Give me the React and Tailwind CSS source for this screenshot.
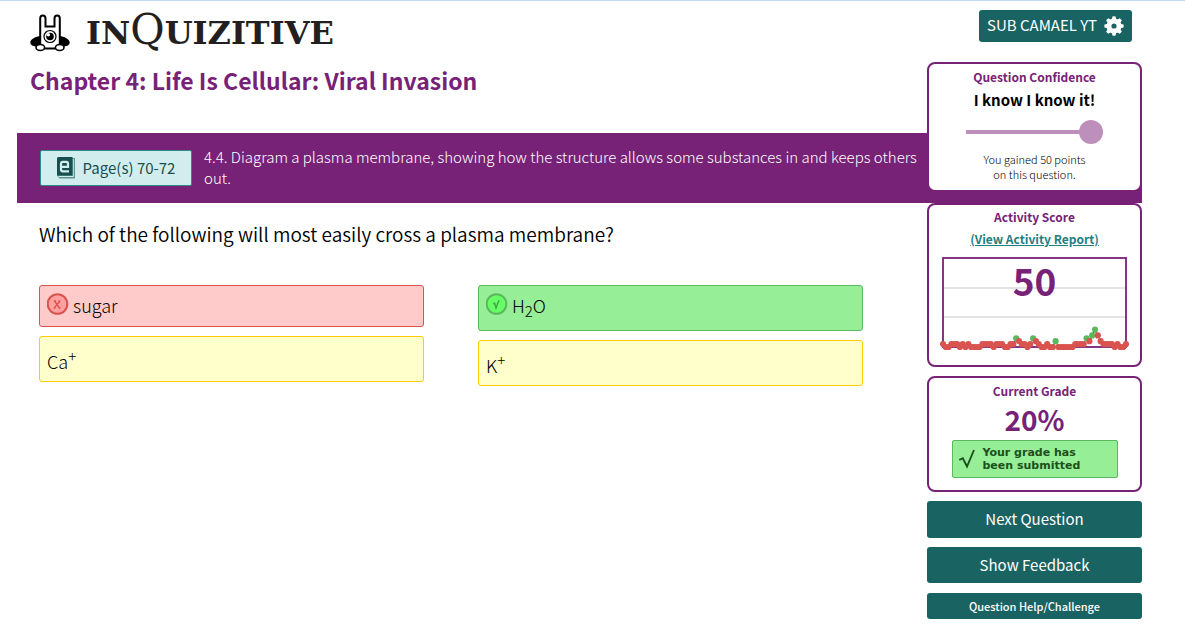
import React from "react";

const LEVELS = [
  1, 0, 0, 1, 1, 1, 0, 1, 0, 1, 0, 0, 0, 0, 1, 1, 1, 1, 0, 1, 1, 1, 0, 0, 1, 1, 3, 2, 1, 1, 0, 1, 3,
  2, 1, 0, 0, 1, 0, 0, 2, 0, 0, 0, 0, 0, 0, 1, 1, 1, 1, 3, 2, 4, 6, 4, 2, 1, 1, 1, 1, 0, 1, 0, 0, 1,
];
const CORRECT = [26, 32, 40, 51, 53, 54];
const pointX = (i) => 3 + i * 2.815;
const pointY = (level) => 91 - level * 2.9;

const CARD = "rounded-lg border-2 border-[#772277] bg-white text-center";
const CARD_TITLE = "text-[12px] leading-4 font-bold text-[#772277]";
const ACTION = "w-full rounded-[3px] bg-[#1a6363] text-white";
const ANSWER = "flex w-full items-start rounded-[3px] border text-left text-[18px] leading-6 font-light text-black";

function Rabbit() {
  return (
    <svg width="40" height="38" viewBox="0 0 40 38" aria-hidden="true">
      <path d="M10 22C4 23 .3 26 .3 28.500C.3 32 5 33 12 32.500H28C35 33 39.700 32 39.700 28.500C39.700 26 36 23 30 22Z" fill="#000" />
      <path
        d="M10.200 31V4.500Q10.200 1.500 12.800 1.500Q15.500 1.500 15.500 4.500V12.500H24.500V4.500Q24.500 1.500 27.200 1.500Q29.800 1.500 29.800 4.500V31Q29.800 34.500 26 34.500H14Q10.200 34.500 10.200 31Z"
        fill="#fff" stroke="#000" strokeWidth="2"
      />
      <circle cx="20" cy="22.500" r="6" fill="#fff" stroke="#000" strokeWidth="1.200" />
      <circle cx="20" cy="22.500" r="3.800" fill="#000" />
      <circle cx="18.300" cy="20.700" r="1.800" fill="#fff" />
      <ellipse cx="10.300" cy="33.500" rx="4.300" ry="3" fill="#fff" stroke="#000" strokeWidth="1.600" />
      <ellipse cx="29.700" cy="33.500" rx="4.300" ry="3" fill="#fff" stroke="#000" strokeWidth="1.600" />
    </svg>
  );
}

function Gear() {
  return (
    <svg width="20" height="20" viewBox="0 0 20 20" aria-hidden="true">
      <circle cx="10" cy="10" r="5.100" fill="none" stroke="#fff" strokeWidth="5" />
      {[0, 45, 90, 135, 180, 225, 270, 315].map((a) => (
        <path key={a} d="M7.800 4L8.400 .5Q10 0 11.600 .5L12.200 4Z" fill="#fff" transform={`rotate(${a} 10 10)`} />
      ))}
    </svg>
  );
}

function Ebook() {
  return (
    <svg width="18" height="22" viewBox="0 0 18 22" aria-hidden="true">
      <path d="M3 1H18V21.500H2.500L.3 19Z" fill="#5f9494" />
      <path d="M1.500 19.500H16.300V2" fill="none" stroke="#d2eded" strokeWidth="1" />
      <path d="M1.500 0H15.500V18.500H0V1.500Q0 0 1.500 0Z" fill="#174e4e" />
      <path d="M4 9.800H11V6.500Q11 4.800 9.300 4.800H5.900Q4 4.800 4 6.700V12.500Q4 14.400 5.900 14.400H12" fill="none" stroke="#d2eded" strokeWidth="2.200" />
    </svg>
  );
}

function WrongMark() {
  return (
    <svg width="22" height="22" viewBox="0 0 22 22" role="img" aria-label="Incorrect">
      <circle cx="10.500" cy="11" r="9.800" fill="#ffa0a0" stroke="#d9534f" strokeWidth="2" />
      <path d="M7.500 8L12.500 15M13 8L7.200 15M6.800 8H9M11.500 8H13.300M6.800 15H8.600M11.500 15H13.500" stroke="#d9534f" strokeWidth="1.300" />
    </svg>
  );
}

function RightMark() {
  return (
    <svg width="22" height="22" viewBox="0 0 22 22" role="img" aria-label="Correct">
      <circle cx="10.500" cy="11" r="9.800" fill="#66ff66" stroke="#5cb85c" strokeWidth="2" />
      <path d="M7.300 10.700L8.600 10.200L10 15L13 7.300" fill="none" stroke="#45a545" strokeWidth="1.500" />
    </svg>
  );
}

function ScoreChart() {
  return (
    <svg viewBox="0 0 189 97" className="w-full" role="img" aria-label="Activity score history">
      <path d="M3 32H186M3 61H186" stroke="#dcdcdc" strokeWidth="1.500" />
      <rect x="3" y="2" width="183" height="89" fill="none" stroke="#772277" strokeWidth="1.800" />
      <polyline
        points={LEVELS.map((l, i) => `${pointX(i)},${pointY(l)}`).join(" ")}
        fill="none" stroke="#111" strokeWidth="1.300" strokeDasharray="2 1"
      />
      {LEVELS.map((l, i) => (
        <circle key={i} cx={pointX(i)} cy={pointY(l)} r="3.100" fill={CORRECT.includes(i) ? "#5cb85c" : "#d9534f"} />
      ))}
    </svg>
  );
}

export default function App() {
  return (
    <div className="min-h-screen border-t border-[#c5d8f5] bg-white pr-[43px] pl-[17px] font-['Noto_Sans_CJK_SC','Open_Sans',sans-serif]">
      <div className="grid grid-cols-[1fr_215px] grid-rows-[132px_auto_1fr]">
        <header className="col-start-1 row-start-1 pt-3 pl-[13px]">
          <div className="flex h-10 items-center gap-4">
            <Rabbit />
            <div className="pb-1 font-['DejaVu_Serif',serif] text-[32px] leading-10 font-bold text-[#231f20]">
              IN<span className="text-[42px] leading-10 font-normal">Q</span>UIZITIVE
            </div>
          </div>
          <h1 className="mt-[11px] text-[23px] leading-8 font-bold text-[#772277]">
            Chapter 4: Life Is Cellular: Viral Invasion
          </h1>
        </header>

        <section className="col-span-2 col-start-1 row-start-2 flex items-start bg-[#772277] pt-[13px] pr-[223px] pb-[15px] pl-[23px] text-white">
          <a href="#pages" className="mt-1 flex h-9 w-[152px] shrink-0 items-center justify-center gap-2 rounded-[2px] border border-[#2e8b8b] bg-[#d2eded] text-[15px] text-[#174e4e]">
            <Ebook />
            Page(s) 70-72
          </a>
          <p className="ml-3 text-[15px] leading-[21px] font-light">
            4.4. Diagram a plasma membrane, showing how the structure allows some substances in and keeps others out.
          </p>
        </section>

        <main className="col-start-1 row-start-3 pr-16 pl-[22px]">
          <h2 className="pt-[15px] text-[19px] leading-8 font-[350] text-black">
            Which of the following will most easily cross a plasma membrane?
          </h2>
          <div className="mt-[35px] grid grid-cols-2 items-start gap-x-[54px]">
            <div className="flex flex-col gap-[9px]">
              <button className={`${ANSWER} h-[42px] gap-1 border-[#d9534f] bg-[#ffcaca] px-[7px] pt-[7px]`}>
                <WrongMark />
                <span>sugar</span>
              </button>
              <button className={`${ANSWER} h-[46px] border-[#ffcc00] bg-[#ffffcc] px-[7px] pt-3`}>
                <span>Ca<sup className="text-[15px]">+</sup></span>
              </button>
            </div>
            <div className="flex flex-col gap-[9px]">
              <button className={`${ANSWER} h-[46px] gap-1 border-[#5cb85c] bg-[#96ee96] px-[7px] pt-[7px]`}>
                <RightMark />
                <span>H<sub className="text-[15px]">2</sub>O</span>
              </button>
              <button className={`${ANSWER} h-[46px] border-[#ffcc00] bg-[#ffffcc] px-[7px] pt-3`}>
                <span>K<sup className="text-[15px]">+</sup></span>
              </button>
            </div>
          </div>
        </main>

        <aside className="col-start-2 row-span-3 row-start-1 flex flex-col pt-[9px]">
          <button className="mr-[10px] flex h-8 items-center gap-[7px] self-end rounded-[3px] bg-[#1a6363] px-2 pb-px text-[15px] text-white">
            SUB CAMAEL YT
            <Gear />
          </button>

          <section className={`${CARD} mt-5 h-[130px] pt-[5px]`}>
            <h3 className={CARD_TITLE}>Question Confidence</h3>
            <label htmlFor="confidence" className="mt-[3px] block text-[15px] leading-6 font-bold text-black">I know I know it!</label>
            <input
              id="confidence"
              type="range"
              defaultValue="100"
              className="mx-auto mt-2 block h-6 w-[137px] appearance-none bg-transparent [&::-webkit-slider-runnable-track]:h-1 [&::-webkit-slider-runnable-track]:bg-[#bd90bb] [&::-webkit-slider-thumb]:-mt-[10px] [&::-webkit-slider-thumb]:size-6 [&::-webkit-slider-thumb]:appearance-none [&::-webkit-slider-thumb]:rounded-full [&::-webkit-slider-thumb]:bg-[#bd90bb]"
            />
            <p className="mt-2 text-[11px] leading-[15px] font-light text-black">
              You gained 50 points
              <br />
              on this question.
            </p>
          </section>

          <section className={`${CARD} mt-[11px] h-[164px] px-[11px] pt-1`}>
            <h3 className={CARD_TITLE}>Activity Score</h3>
            <a href="#report" className="mt-1.5 block text-[12px] leading-4 font-bold text-[#1f8080] underline">
              (View Activity Report)
            </a>
            <div className="relative mt-[9px]">
              <ScoreChart />
              <div className="absolute inset-x-0 top-0 text-[37px] leading-[48px] font-bold text-[#772277]">50</div>
            </div>
          </section>

          <section className={`${CARD} mt-[9px] h-[116px] pt-[5px]`}>
            <h3 className={CARD_TITLE}>Current Grade</h3>
            <div className="mt-0.5 text-[28px] leading-9 font-bold text-[#772277]">20%</div>
            <div className="mx-auto mt-[3px] flex h-[38px] w-[166px] items-center rounded-[2px] border border-[#5cb85c] bg-[#96ee96] pl-1.5 text-left font-['DejaVu_Sans',sans-serif] text-[11px] leading-[13px] font-bold text-[#1c501c]">
              <svg width="17" height="20" viewBox="0 0 17 20" className="mr-[7px]" aria-hidden="true">
                <path d="M.3 11L3.800 9.200L8 17.500L15 1" fill="none" stroke="#1c501c" strokeWidth="1.900" />
              </svg>
              <p>
                Your grade has
                <br />
                been submitted
              </p>
            </div>
          </section>

          <button className={`${ACTION} mt-[9px] h-[37px] text-[15px]`}>Next Question</button>
          <button className={`${ACTION} mt-[9px] h-9 text-[15px]`}>Show Feedback</button>
          <button className={`${ACTION} mt-[10px] h-[26px] text-[11px] font-medium`}>Question Help/Challenge</button>
        </aside>
      </div>
    </div>
  );
}
